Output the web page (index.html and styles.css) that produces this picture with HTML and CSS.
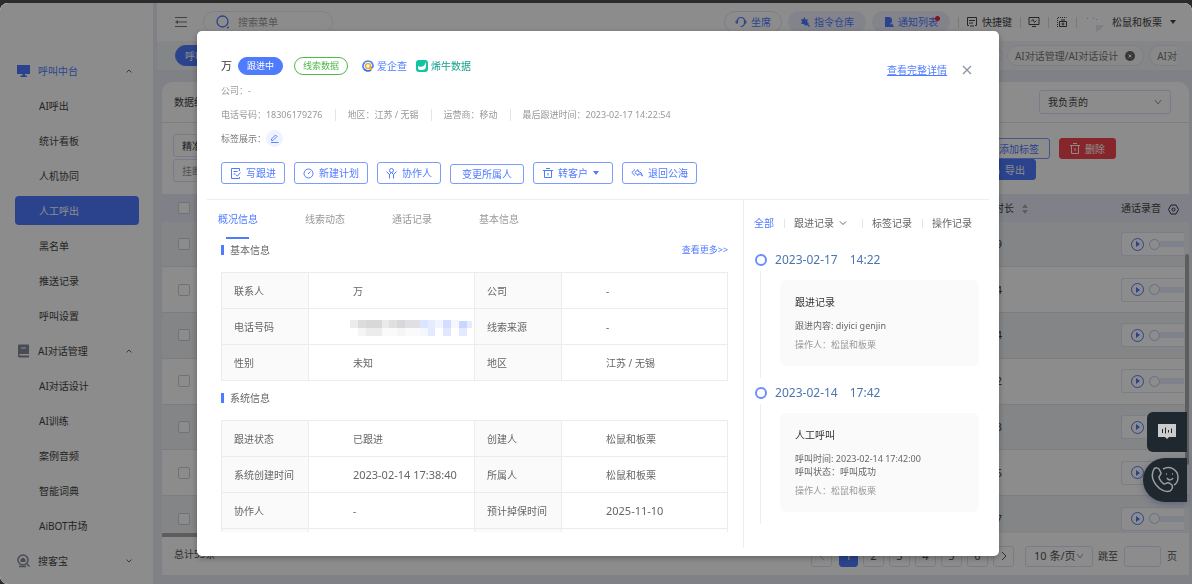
FILE: index.html
```html
<!DOCTYPE html>
<html lang="zh-CN">
<head>
<meta charset="utf-8">
<title>人工呼出</title>
<link rel="stylesheet" href="styles.css">
</head>
<body>
<div class="app">
  <nav class="sidebar">
    <button class="group group-open" type="button">
      <svg width="14" height="14" viewBox="0 0 14 14"><path fill="currentColor" d="M0 1h13v9H8v1.500h2V13H3.500v-1.500h2V10H0z"/></svg>
      <span>呼叫中台</span>
      <svg class="arrow" width="8" height="8" viewBox="0 0 8 8"><path d="M1.500 5.500L4 3l2.500 2.500" fill="none" stroke="currentColor"/></svg>
    </button>
    <ul class="menu">
      <li><a href="#">AI呼出</a></li>
      <li><a href="#">统计看板</a></li>
      <li><a href="#">人机协同</a></li>
      <li><a href="#" class="active">人工呼出</a></li>
      <li><a href="#">黑名单</a></li>
      <li><a href="#">推送记录</a></li>
      <li><a href="#">呼叫设置</a></li>
    </ul>
    <button class="group" type="button">
      <svg width="14" height="14" viewBox="0 0 14 14"><path fill="#858b9c" d="M2 .5h10v9.500H3a.7.7 0 0 0 0 1.400h9V13.500H2.500A1.500 1.500 0 0 1 1 12V1.500A1 1 0 0 1 2 .5z"/><path stroke="#fff" d="M4 4h5"/></svg>
      <span>AI对话管理</span>
      <svg class="arrow" width="8" height="8" viewBox="0 0 8 8"><path d="M1.500 5.500L4 3l2.500 2.500" fill="none" stroke="currentColor"/></svg>
    </button>
    <ul class="menu">
      <li><a href="#">AI对话设计</a></li>
      <li><a href="#">AI训练</a></li>
      <li><a href="#">案例音频</a></li>
      <li><a href="#">智能词典</a></li>
      <li><a href="#">AiBOT市场</a></li>
    </ul>
    <button class="group" type="button">
      <svg width="14" height="14" viewBox="0 0 14 14" fill="none" stroke="#858b9c"><circle cx="6" cy="6" r="5" stroke-width="1.500"/><path fill="#858b9c" stroke="none" d="M3.500 5.500L6 3.500l2.500 2V8h-5z"/><path d="M9.500 9.500l3 3M2 12.500h7" stroke-width="1.500"/></svg>
      <span>搜客宝</span>
      <svg class="arrow" width="8" height="8" viewBox="0 0 8 8"><path d="M1.500 2.500L4 5l2.500-2.500" fill="none" stroke="currentColor"/></svg>
    </button>
  </nav>

  <div class="main">
    <header class="header">
      <svg width="12" height="12" viewBox="0 0 12 12" fill="none" stroke="#777"><path d="M0 1.500h12M3 6h9M0 10.500h12"/><path d="M3 4v4L0 6z" fill="#777" stroke="none"/></svg>
      <label class="search">
        <svg width="14" height="14" viewBox="0 0 14 14" fill="none" stroke="#4f7bff" stroke-width="1.300"><circle cx="6.500" cy="6.500" r="5.500"/><path d="M11.500 12l1 1" stroke-width="2"/></svg>
        <input type="text" placeholder="搜索菜单" aria-label="搜索菜单">
      </label>
      <div class="tools">
        <button class="pill pill-line" type="button"><svg width="12" height="12" viewBox="0 0 12 12" fill="none" stroke="currentColor" stroke-width="1.200"><path d="M2.500 7V5a3.500 3.500 0 0 1 7 0v2c0 2-1 3.500-4 3.500"/><path d="M2.500 4.500a1.500 1.500 0 0 0 0 3M9.500 4.500a1.500 1.500 0 0 1 0 3"/></svg>坐席</button>
        <button class="pill" type="button"><svg width="10" height="10" viewBox="0 0 10 10"><path fill="currentColor" d="M1 2l2 .5L4.500 0l1 2.500L8 2.500 7 5l2 1-1 1 2 2-1 1-2-2-2 1-1-2H1l1-2z"/></svg>指令仓库</button>
        <button class="pill pill-dot" type="button"><svg width="10" height="10" viewBox="0 0 10 10"><path fill="currentColor" d="M1 0h5l2 2v3L6 7l3 2v1H1z"/><path fill="currentColor" d="M8 6l2 4H6z"/></svg>通知列表</button>
        <i class="bar"></i>
        <button class="tool" type="button"><svg width="12" height="12" viewBox="0 0 12 12" fill="none" stroke="currentColor"><path d="M3 9.500H1.500v-8h9v8H9M3 4.500h6M3 7h4M4 10h4"/></svg>快捷键</button>
        <i class="bar"></i>
        <button class="tool" type="button" aria-label="监控"><svg width="12" height="12" viewBox="0 0 12 12" fill="none" stroke="currentColor"><path d="M1 1.500h10v7H1zM4 10.500h4M3 5.500l2-2 1.500 3 2-2"/></svg></button>
        <i class="bar"></i>
        <button class="tool" type="button" aria-label="截图"><svg width="12" height="12" viewBox="0 0 12 12" fill="none" stroke="currentColor"><path d="M1.500 11V1.500h9" stroke-dasharray="1 1"/><path d="M3.500 5.500h7v5h-7zM5 4h4"/><circle cx="7" cy="8" r="1"/></svg></button>
        <i class="bar"></i>
        <svg width="22" height="20" viewBox="0 0 22 20"><path fill="#e3e8f5" d="M12 13h8l-3 4-5 3z"/><path fill="#bbb" d="M3 6h1v1H3zM9 6h1v1H9zM12 7h1v1h-1z"/></svg>
        <button class="tool user" type="button">松鼠和板栗<i class="caret"></i></button>
      </div>
    </header>

    <div class="tabs">
      <a href="#" class="tab tab-on">呼叫</a>
      <div class="tabs-right">
        <a href="#" class="tab tab-wide">案例</a>
        <a href="#" class="tab">AI对话管理/AI对话设计<svg width="10" height="10" viewBox="0 0 10 10"><circle cx="5" cy="5" r="5" fill="#666"/><path d="M3.500 3.500l3 3m0-3l-3 3" stroke="#fff"/></svg></a>
        <a href="#" class="tab tab-cut">AI对</a>
      </div>
    </div>

    <main class="card">
      <div class="card-head">
        <h1>数据统计</h1>
        <select class="owner" aria-label="数据范围"><option>我负责的</option></select>
      </div>
      <div class="filters">
        <div class="filter-fields">
          <select aria-label="匹配方式"><option>精准</option></select>
          <input type="text" placeholder="挂断原因" aria-label="挂断原因">
        </div>
        <div class="filter-actions">
          <div class="action-row">
            <button class="btn" type="button">添加标签</button>
            <button class="btn btn-red" type="button"><svg width="10" height="11" viewBox="0 0 10 11" fill="none" stroke="currentColor"><path d="M0 2.500h10M1.500 2.500v8h7v-8M3 .5h4M5 5v3"/></svg>删除</button>
          </div>
          <div class="action-row action-second">
            <button class="btn btn-blue" type="button"><svg width="10" height="10" viewBox="0 0 10 10" fill="none" stroke="currentColor"><path d="M5 0v6M1 5v4h8V5"/></svg>导出</button>
          </div>
        </div>
      </div>

      <div class="grid-wrap">
        <table class="grid">
          <thead>
            <tr>
              <th class="c-check"><input type="checkbox" aria-label="全选"></th>
              <th></th>
              <th class="c-time">通话时长 <svg width="8" height="10" viewBox="0 0 8 10" fill="#aaa"><path d="M4 0l3 4H1zM4 10l3-4H1z"/></svg></th>
              <th class="c-audio">通话录音 <svg width="11" height="11" viewBox="0 0 11 11" fill="none" stroke="#33384a"><path d="M3 1h5l2.500 4.500L8 10H3L.5 5.500z"/><circle cx="5.500" cy="5.500" r="1.500"/></svg></th>
            </tr>
          </thead>
          <tbody>
            <tr><td class="c-check"><input type="checkbox" aria-label="选择"></td><td></td><td>00:09</td><td class="c-audio"><div class="player"><button type="button" aria-label="播放"></button><i></i></div></td></tr>
            <tr><td class="c-check"><input type="checkbox" aria-label="选择"></td><td></td><td>00:04</td><td class="c-audio"><div class="player"><button type="button" aria-label="播放"></button><i></i></div></td></tr>
            <tr><td class="c-check"><input type="checkbox" aria-label="选择"></td><td></td><td>00:04</td><td class="c-audio"><div class="player"><button type="button" aria-label="播放"></button><i></i></div></td></tr>
            <tr><td class="c-check"><input type="checkbox" aria-label="选择"></td><td></td><td>00:02</td><td class="c-audio"><div class="player"><button type="button" aria-label="播放"></button><i></i></div></td></tr>
            <tr><td class="c-check"><input type="checkbox" aria-label="选择"></td><td></td><td>00:03</td><td class="c-audio"><div class="player"><button type="button" aria-label="播放"></button><i></i></div></td></tr>
            <tr><td class="c-check"><input type="checkbox" aria-label="选择"></td><td></td><td>00:05</td><td class="c-audio"><div class="player"><button type="button" aria-label="播放"></button><i></i></div></td></tr>
            <tr><td class="c-check"><input type="checkbox" aria-label="选择"></td><td></td><td>00:07</td><td class="c-audio"><div class="player"><button type="button" aria-label="播放"></button><i></i></div></td></tr>
          </tbody>
        </table>
        <span class="v-scroll"></span>
      </div>
      <div class="h-scroll"></div>

      <footer class="pager">
        <span class="total">总计55条</span>
        <div class="pages">
          <button type="button" class="dim" aria-label="上一页"><svg width="8" height="10" viewBox="0 0 8 10" fill="none" stroke="currentColor"><path d="M6 1L2 5l4 4"/></svg></button>
          <button type="button" class="current">1</button>
          <button type="button">2</button>
          <button type="button">3</button>
          <button type="button">4</button>
          <button type="button">5</button>
          <button type="button">6</button>
          <button type="button" aria-label="下一页"><svg width="8" height="10" viewBox="0 0 8 10" fill="none" stroke="currentColor"><path d="M2 1l4 4-4 4"/></svg></button>
        </div>
        <select aria-label="每页条数"><option>10 条/页</option></select>
        <label class="jump">跳至<input type="text"><span>页</span></label>
      </footer>
    </main>
  </div>
</div>

<div class="overlay">
  <section class="dialog" role="dialog" aria-label="线索详情">
    <div class="dialog-head">
      <div class="title-row">
        <h2>万</h2>
        <span class="tag tag-blue">跟进中</span>
        <span class="tag tag-green">线索数据</span>
        <a href="#" class="source source-blue"><svg width="12" height="12" viewBox="0 0 12 12" fill="none" stroke-width="1.700"><path d="M6 1a5 5 0 0 0-4.300 7.500" stroke="#3f86ff"/><path d="M6 1a5 5 0 0 1 5 5c0 2-2 2.500-2.500.5" stroke="#3f86ff"/><path d="M1.700 8.500A5 5 0 0 0 9 10" stroke="#2b6df5"/><circle cx="6" cy="6" r="2.500" stroke="#f9a825"/><path d="M8 8l2 1.500" stroke="#f9a825"/></svg>爱企查</a>
        <a href="#" class="source source-teal"><svg width="12" height="12" viewBox="0 0 12 12"><rect width="12" height="12" rx="3" fill="#12c4a0"/><path fill="#fff" d="M10 2v4a4 4 0 0 1-4 4H4a2 2 0 0 1-2-2V6c2 1 3 1 4.500.5C8.500 6 9 4 10 2z"/></svg>烯牛数据</a>
        <a href="#" class="detail">查看完整详情</a>
        <button class="close" type="button" aria-label="关闭"><svg width="10" height="10" viewBox="0 0 10 10" stroke="#8d93a3" stroke-width="1.300"><path d="M1 1l8 8M9 1L1 9"/></svg></button>
      </div>
      <p class="meta">公司：-</p>
      <p class="meta meta-list"><span>电话号码：18306179276</span><span>地区：江苏 / 无锡</span><span>运营商：移动</span><span>最后跟进时间：2023-02-17 14:22:54</span></p>
      <div class="labels">标签展示：<button type="button" aria-label="编辑标签"><svg width="9" height="9" viewBox="0 0 9 9" fill="none" stroke="#5c83ff"><path d="M1 8.500h7.500M1.500 6.500V5l4-4 1.500 1.500-4 4z"/></svg></button></div>
      <div class="actions">
        <button class="btn" type="button"><svg width="11" height="11" viewBox="0 0 11 11" fill="none" stroke="currentColor"><path d="M9.500 3V.5h-8v10h8V9M3.500 3.500h4M3.500 6h2M10.500 4.500L7.500 8 6 7"/></svg>写跟进</button>
        <button class="btn" type="button"><svg width="11" height="11" viewBox="0 0 11 11" fill="none" stroke="currentColor"><circle cx="5.500" cy="5.500" r="4.500"/><path d="M5 6l2.500-2.500"/></svg>新建计划</button>
        <button class="btn" type="button"><svg width="11" height="11" viewBox="0 0 11 11" fill="none" stroke="currentColor"><circle cx="5.500" cy="2.500" r="2"/><path d="M3.500 10.500V6.500L.5 3.500M7.500 10.500V6.500l3-3M3.500 6.500l2-2 2 2"/></svg>协作人</button>
        <button class="btn btn-low" type="button">变更所属人</button>
        <button class="btn btn-menu" type="button"><svg width="10" height="11" viewBox="0 0 10 11" fill="none" stroke="currentColor"><path d="M0 2.500h10M1.500 2.500v7h7v-7M3 .5h4M5 5v2.500"/></svg>转客户<i class="caret"></i></button>
        <button class="btn" type="button"><svg width="12" height="10" viewBox="0 0 12 10" fill="none" stroke="currentColor"><path d="M4 1.500L.8 4.500 4 7.500M7 1.500L3.800 4.500 7 7.500V6q3-.5 4.500 2Q11 4 7 3.300z"/></svg>退回公海</button>
      </div>
    </div>

    <div class="dialog-body">
      <div class="info">
        <div class="info-tabs">
          <a href="#" class="on">概况信息</a><a href="#">线索动态</a><a href="#">通话记录</a><a href="#">基本信息</a>
        </div>
        <div class="section-title"><h3>基本信息</h3><a href="#">查看更多&gt;&gt;</a></div>
        <table class="facts">
          <tbody>
            <tr><th>联系人</th><td>万</td><th>公司</th><td>-</td></tr>
            <tr><th>电话号码</th><td class="masked"><svg width="122" height="24" viewBox="0 0 122 24"><path fill="#ececec" d="M0 5h8v8H0z"/><path fill="#dcdcdc" d="M8 5h8v8H8z"/><path fill="#d8d8d8" d="M16 5h16v8H16z"/><path fill="#eaeaea" d="M32 5h7v8h-7z"/><path fill="#e0e0e0" d="M39 5h8v8h-8z"/><path fill="#d8d8d8" d="M47 5h8v8h-8z"/><path fill="#e0e0e4" d="M55 5h15v8H55z"/><path fill="#dde4ff" d="M70 5h8v8h-8z"/><path fill="#e6ecff" d="M78 5h7v8h-7z"/><path fill="#f1f4ff" d="M85 5h8v8h-8z"/><path fill="#d3deff" d="M93 5h8v8h-8z"/><path fill="#e0e8ff" d="M93 13h8v8h-8z"/><path fill="#f5f7ff" d="M101 5h8v8h-8z"/><path fill="#c9d6ff" d="M109 6h8v7h-8z"/><path fill="#e4eaff" d="M117 6h5v7h-5z"/><path fill="#f5f5f5" d="M8 13h8v8H8zM47 13h8v8h-8z"/><path fill="#ececec" d="M16 13h16v8H16z"/><path fill="#fafafa" d="M32 13h15v8H32zM55 13h15v8H55z"/><path fill="#f5f7ff" d="M70 13h8v8h-8z"/><path fill="#e3eaff" d="M78 13h7v8h-7zM109 13h8v8h-8z"/></svg></td><th>线索来源</th><td>-</td></tr>
            <tr><th>性别</th><td>未知</td><th>地区</th><td>江苏 / 无锡</td></tr>
          </tbody>
        </table>
        <div class="section-title section-second"><h3>系统信息</h3></div>
        <table class="facts">
          <tbody>
            <tr><th>跟进状态</th><td>已跟进</td><th>创建人</th><td>松鼠和板栗</td></tr>
            <tr><th>系统创建时间</th><td class="num">2023-02-14 17:38:40</td><th>所属人</th><td>松鼠和板栗</td></tr>
            <tr><th>协作人</th><td>-</td><th>预计掉保时间</th><td class="num">2025-11-10</td></tr>
            <tr><th></th><td></td><th></th><td></td></tr>
          </tbody>
        </table>
      </div>

      <aside class="log">
        <div class="log-tabs">
          <a href="#" class="on">全部</a>
          <a href="#">跟进记录<svg width="8" height="8" viewBox="0 0 8 8" fill="none" stroke="currentColor"><path d="M1 2.500l3 3 3-3"/></svg></a>
          <a href="#">标签记录</a>
          <a href="#">操作记录</a>
        </div>
        <ol class="timeline">
          <li>
            <h4>2023-02-17<span>14:22</span></h4>
            <div class="note">
              <h5>跟进记录</h5>
              <p>跟进内容: diyici genjin</p>
              <p class="by">操作人：松鼠和板栗</p>
            </div>
          </li>
          <li>
            <h4>2023-02-14<span>17:42</span></h4>
            <div class="note">
              <h5>人工呼叫</h5>
              <p>呼叫时间: 2023-02-14 17:42:00</p>
              <p>呼叫状态：呼叫成功</p>
              <p class="by">操作人：松鼠和板栗</p>
            </div>
          </li>
        </ol>
      </aside>
    </div>
  </section>
</div>

<div class="floaters">
  <button class="float-chat" type="button" aria-label="语音消息"><svg width="18" height="16" viewBox="0 0 18 16"><path fill="#c9cbcd" d="M0 0h18v13h-7l-2 2-2-2H0z"/><path stroke="#1f272f" d="M4.500 5v4M7.500 3.500v6M10.500 6v2.500M13.500 4.500v4.500"/></svg></button>
  <button class="float-call" type="button" aria-label="拨打电话"><svg width="28" height="28" viewBox="0 0 28 28" fill="none" stroke="#9b9ea2" stroke-width="1.500"><path d="M3 3c2-2 4-1 5 0l2 4c0 2-2 3-2 4 0 2 3 6 5 7 2 0 3-2 5-1l3 2c1 2 0 5-2 6C10 28-3 14 3 3z"/><path d="M12 3c7-4 15 1 15 8 0 4-2 7-4 8"/><path d="M16 12c2 3 5 2 6 0M15 8h1M21 8h1"/></svg></button>
</div>
</body>
</html>
```
FILE: styles.css
```css
*, *::before, *::after { box-sizing: border-box; }

html, body { height: 100%; }

body {
  margin: 0;
  padding-top: 3px;
  overflow: hidden;
  background: #2b2b2b;
  color: #444;
  font: 10px/14px "Noto Sans", "Noto Sans CJK SC", sans-serif;
  white-space: nowrap;
}

h1, h2, h3, h4, h5, p, ul, ol { margin: 0; padding: 0; font-weight: 400; }
ul, ol { list-style: none; }
a { color: inherit; text-decoration: none; }
i { font-style: normal; }
svg { display: block; flex: none; }

button, input, select {
  margin: 0;
  padding: 0;
  border: 0;
  background: none;
  color: inherit;
  font: inherit;
}

input::placeholder { color: #999; opacity: 1; }

.app {
  display: flex;
  height: 100%;
  background: #e7ebf4;
  border-radius: 8px 8px 0 8px;
  overflow: hidden;
}

/* Sidebar */
.sidebar {
  flex: none;
  width: 153px;
  padding-top: 50px;
  background: #fff;
}

.group {
  display: flex;
  align-items: center;
  gap: 7px;
  width: 100%;
  height: 35px;
  padding: 0 20px 0 17px;
}

.group-open { color: #4f7bff; }
.arrow { margin-left: auto; color: #666; }

.menu a {
  display: flex;
  align-items: center;
  height: 29px;
  margin: 0 14px 0 15px;
  padding-left: 24px;
  border-radius: 4px;
}

.menu li { padding: 3px 0; }
.menu .active { background: #4f7bff; color: #fff; }

/* Top bar */
.main {
  flex: 1;
  display: flex;
  flex-direction: column;
  min-width: 0;
  margin-left: 4px;
}

.header {
  display: flex;
  align-items: center;
  height: 38px;
  padding: 0 16px 0 18px;
  background: #fff;
}

.search {
  display: flex;
  align-items: center;
  gap: 8px;
  width: 130px;
  height: 22px;
  margin-left: 16px;
  padding-left: 12px;
  border: 1px solid #e8ebf8;
  border-radius: 11px;
}

.search input { width: 80px; }

.tools { display: flex; align-items: center; gap: 6px; margin-left: auto; }

.pill {
  display: flex;
  align-items: center;
  gap: 4px;
  height: 22px;
  padding: 0 11px;
  border: 1px solid #eef1fd;
  border-radius: 11px;
  background: #eef1fd;
  color: #4f7bff;
}

.pill-line { background: #fff; border-color: #dfe5fb; padding: 0 10px; }
.pill-dot { position: relative; }

.pill-dot::after {
  content: "";
  position: absolute;
  top: 4px;
  right: 9px;
  width: 5px;
  height: 5px;
  border-radius: 50%;
  background: #f5222d;
}

.tool { display: flex; align-items: center; gap: 4px; }
.bar { width: 1px; height: 11px; margin: 0 1px 0 2px; background: #ddd; }

.caret {
  border: 3px solid transparent;
  border-top: 4px solid currentColor;
  border-bottom: 0;
}

.user { gap: 8px; }

/* Page tabs */
.tabs {
  display: flex;
  justify-content: space-between;
  align-items: center;
  height: 29px;
  padding: 0 15px 0 18px;
  background: #f3f4f7;
}

.tabs-right { display: flex; gap: 5px; }

.tab {
  display: flex;
  align-items: center;
  gap: 7px;
  height: 21px;
  padding: 0 8px 0 7px;
  border: 1px solid #e3e6f5;
  border-radius: 11px;
  background: #fafafa;
  color: #777;
}

.tab-on { background: #4f7bff; border-color: #4f7bff; color: #fff; padding: 0 9px; }
.tab-wide { padding-right: 24px; }
.tab-cut { border-right: 0; border-radius: 11px 0 0 11px; padding-right: 0; }

/* Content card */
.card {
  flex: 1;
  display: flex;
  flex-direction: column;
  min-height: 0;
  margin: 12px 3px 9px 5px;
  border-radius: 10px 10px 0 0;
  background: #fff;
  overflow: hidden;
}

.card-head {
  display: flex;
  align-items: center;
  justify-content: space-between;
  height: 41px;
  padding: 0 18px 0 12px;
  border-bottom: 1px solid #e3e3e3;
}

.card-head h1 { font-size: 10px; }

select {
  appearance: none;
  border: 1px solid #dde2f7;
  border-radius: 3px;
  background: url("data:image/svg+xml,%3Csvg xmlns='http://www.w3.org/2000/svg' width='8' height='6'%3E%3Cpath d='M1 1l3 4 3-4' fill='none' stroke='%23999'/%3E%3C/svg%3E") no-repeat right 8px center;
}

.owner { width: 132px; height: 24px; padding-left: 8px; }

.filters {
  display: flex;
  justify-content: space-between;
  height: 71px;
  padding: 11px 73px 0 11px;
}

.filter-fields { display: flex; flex-direction: column; gap: 2px; width: 200px; }

.filter-fields select,
.filter-fields input {
  height: 23px;
  padding-left: 8px;
  border: 1px solid #dde2f7;
  border-radius: 3px;
}

.filter-actions { padding-top: 4px; }
.action-row { display: flex; justify-content: flex-end; gap: 9px; }
.action-second { padding-right: 80px; }

.btn {
  display: flex;
  align-items: center;
  justify-content: center;
  gap: 5px;
  height: 21px;
  padding: 0 10px;
  border: 1px solid #7c9bff;
  border-radius: 3px;
  color: #4f7bff;
}

.btn-red { background: #f5444d; border-color: #f5444d; color: #fff; }
.btn-blue { background: #4f7bff; border-color: #4f7bff; color: #fff; }

.grid-wrap { position: relative; flex: 1; min-height: 0; overflow: hidden; }

.grid {
  width: 100%;
  height: 348px;
  border-collapse: collapse;
  table-layout: fixed;
}

.grid th, .grid td {
  padding: 0;
  text-align: left;
  font-weight: 400;
}

.grid th { height: 28px; background: #e9ecf7; }
.grid td { border-bottom: 1px solid #e3e3e3; font-size: 11px; }
.grid tbody tr:nth-child(odd) { background: #f0f2f5; }
.grid th svg { display: inline-block; margin-left: 4px; vertical-align: middle; }
.grid .c-check { width: 50px; padding-left: 16px; }
.c-time { width: 147px; }
.grid .c-audio { width: 68px; }

.grid input {
  appearance: none;
  display: block;
  width: 12px;
  height: 12px;
  border: 1px solid #d0d0d0;
  border-radius: 2px;
  background: #fff;
}

.player {
  display: flex;
  align-items: center;
  gap: 5px;
  width: 63px;
  height: 24px;
  padding-left: 9px;
  border: 1px solid #e0e5f8;
  border-right: 0;
  border-radius: 3px 0 0 3px;
  background: #fff;
}

.player button {
  display: flex;
  align-items: center;
  justify-content: center;
  width: 13px;
  height: 13px;
  border: 1px solid #4f7bff;
  border-radius: 50%;
}

.player button::after {
  content: "";
  border: 3px solid transparent;
  border-left: 4px solid #4f7bff;
  border-right: 0;
}

.player i {
  flex: 1;
  display: flex;
  align-items: center;
}

.player i::before {
  content: "";
  width: 11px;
  height: 11px;
  border: 1px solid #b9c8f8;
  border-radius: 50%;
}

.player i::after {
  content: "";
  flex: 1;
  height: 6px;
  background: #e8edfb;
}

.v-scroll {
  position: absolute;
  top: 60px;
  right: 0;
  width: 4px;
  height: 211px;
  border-radius: 2px;
  background: #aaa;
}

.h-scroll { width: 50%; height: 4px; background: #aaa; }

.pager {
  display: flex;
  align-items: center;
  height: 38px;
  padding: 0 12px;
  color: #555;
}

.total { margin-right: auto; padding-bottom: 5px; }
.pages { display: flex; gap: 5px; }

.pages button {
  display: flex;
  align-items: center;
  justify-content: center;
  width: 21px;
  height: 21px;
  border: 1px solid #dde2f7;
  border-radius: 3px;
  font-size: 11px;
}

.pages .dim { color: #bbb; margin-right: 2px; }
.pages .current { background: #4f7bff; border-color: #4f7bff; color: #fff; width: 19px; }
.pager select { width: 68px; height: 21px; margin: 0 5px 0 11px; padding-left: 8px; font-size: 11px; }
.jump { display: flex; align-items: center; gap: 6px; }
.jump input { width: 37px; height: 21px; border: 1px solid #dde2f7; border-radius: 3px; }

/* Dialog */
.overlay {
  position: fixed;
  inset: 3px 0 0;
  display: flex;
  justify-content: center;
  padding: 28px 0;
  background: rgba(0, 0, 0, 0.45);
  border-radius: 8px 8px 0 8px;
}

.dialog {
  display: flex;
  flex-direction: column;
  width: 67.3%;
  min-width: 780px;
  margin-left: 4px;
  border-radius: 5px;
  background: #fff;
  box-shadow: 0 2px 6px rgba(0, 0, 0, 0.3);
  color: #666;
  overflow: hidden;
}

.dialog-head {
  margin: 0 10px;
  padding: 25px 14px 15px;
  border-bottom: 1px solid #eee;
}

.title-row { display: flex; align-items: center; height: 20px; }
.title-row h2 { font-size: 11px; color: #333; }

.tag {
  height: 18px;
  padding: 0 8px;
  border: 1px solid;
  border-radius: 9px;
  font-size: 9px;
  line-height: 16px;
}

.tag-blue { margin-left: 6px; border-color: #4f7bff; background: #4f7bff; color: #fff; }
.tag-green { margin-left: 11px; color: #4fb848; }

.source { display: flex; align-items: center; gap: 3px; margin-left: 9px; }
.source-blue { margin-left: 14px; color: #4f7bff; }
.source-teal { color: #13a08f; }
.detail { margin: 8px 15px 0 auto; color: #4f7bff; text-decoration: underline; }
.close { display: flex; margin: 8px 3px 0 0; }

.meta { padding-top: 8px; color: #999; font-size: 9px; line-height: 14px; }
.meta-list { display: flex; align-items: center; padding-top: 10px; }
.meta-list span + span { margin-left: 12px; padding-left: 12px; border-left: 1px solid #e5e5e5; line-height: 12px; }

.labels { display: flex; align-items: center; padding-top: 8px; color: #777; font-size: 9px; }

.labels button {
  display: flex;
  align-items: center;
  justify-content: center;
  width: 17px;
  height: 17px;
  border-radius: 50%;
  background: #eff3ff;
}

.actions { display: flex; align-items: flex-end; gap: 9px; padding-top: 15px; }
.actions .btn { height: 22px; padding: 0 8px; }
.actions .btn-low { height: 20px; padding: 0 11px; }
.actions .btn-menu { padding: 0 13px 0 9px; }

.dialog-body { flex: 1; display: flex; min-height: 0; padding-bottom: 8px; }

.info {
  flex: 1;
  min-width: 0;
  margin-bottom: 16px;
  padding: 12px 15px 0 21px;
  overflow: hidden;
}

.info-tabs { display: flex; gap: 47px; color: #999; }
.info-tabs a { display: flex; flex-direction: column; align-items: center; height: 27px; }
.info-tabs .on { color: #4f7bff; }
.info-tabs .on::after { content: ""; width: 23px; height: 2px; margin-top: auto; background: #4f7bff; }

.section-title {
  display: flex;
  align-items: center;
  justify-content: space-between;
  height: 22px;
  padding-left: 3px;
}

.section-title h3 { padding-left: 6px; border-left: 3px solid #4f7bff; font-size: 10px; line-height: 10px; }
.section-title a { color: #4f7bff; font-size: 9px; }
.section-second { margin-top: 6px; }

.facts {
  width: calc(100% - 3px);
  margin: 11px 0 0 3px;
  border-collapse: collapse;
  table-layout: fixed;
}

.facts th, .facts td {
  height: 36px;
  padding: 0 0 0 44px;
  border: 1px solid #ececec;
  text-align: left;
  font-weight: 400;
}

.facts th { width: 87px; padding-left: 12px; background: #fafafa; }
.facts .num { font-size: 11px; }
.facts .masked { padding-left: 41px; }

.log {
  flex: none;
  width: 256px;
  padding: 16px 20px 0 10px;
  border-left: 1px solid #eee;
}

.log-tabs { display: flex; }
.log-tabs a { display: flex; align-items: center; gap: 5px; }
.log-tabs a + a { margin-left: 10px; padding-left: 10px; background: linear-gradient(#e5e5e5, #e5e5e5) no-repeat left center / 1px 9px; }
.log-tabs a:nth-child(3) { margin-left: 15px; }
.log-tabs .on { color: #4f7bff; }

.timeline { padding-top: 22px; }

.timeline li {
  display: flex;
  flex-direction: column;
  margin-left: 6px;
  padding: 0 0 12px 20px;
  background: linear-gradient(#eee, #eee) no-repeat 0 19px / 1px 100%;
}

.timeline li + li { margin-top: 7px; }

.timeline h4 {
  display: flex;
  align-items: center;
  gap: 12px;
  margin-left: -25px;
  color: #4a76ad;
  font-size: 12px;
  line-height: 16px;
}

.timeline h4::before {
  content: "";
  width: 12px;
  height: 12px;
  margin-right: -4px;
  border: 2px solid #6c8fff;
  border-radius: 50%;
}

.note {
  margin-top: 12px;
  padding: 15px;
  border-radius: 6px;
  background: #fafafa;
  font-size: 9px;
  line-height: 13px;
}

.note h5 { margin-bottom: 10px; color: #333; font-size: 10px; line-height: 14px; }
.note .by { margin-top: 6px; color: #999; }

/* Floating shortcuts */
.floaters {
  position: fixed;
  right: 5px;
  bottom: 82px;
  display: flex;
  flex-direction: column;
  align-items: flex-end;
  gap: 6px;
}

.floaters button {
  display: flex;
  align-items: center;
  justify-content: center;
  background: #1f272f;
}

.float-chat { width: 40px; height: 40px; border-radius: 6px 0 0 6px; }
.float-call { width: 44px; height: 44px; border-radius: 22px 0 0 22px; box-shadow: 0 2px 6px rgba(40, 50, 100, 0.4); }
```
